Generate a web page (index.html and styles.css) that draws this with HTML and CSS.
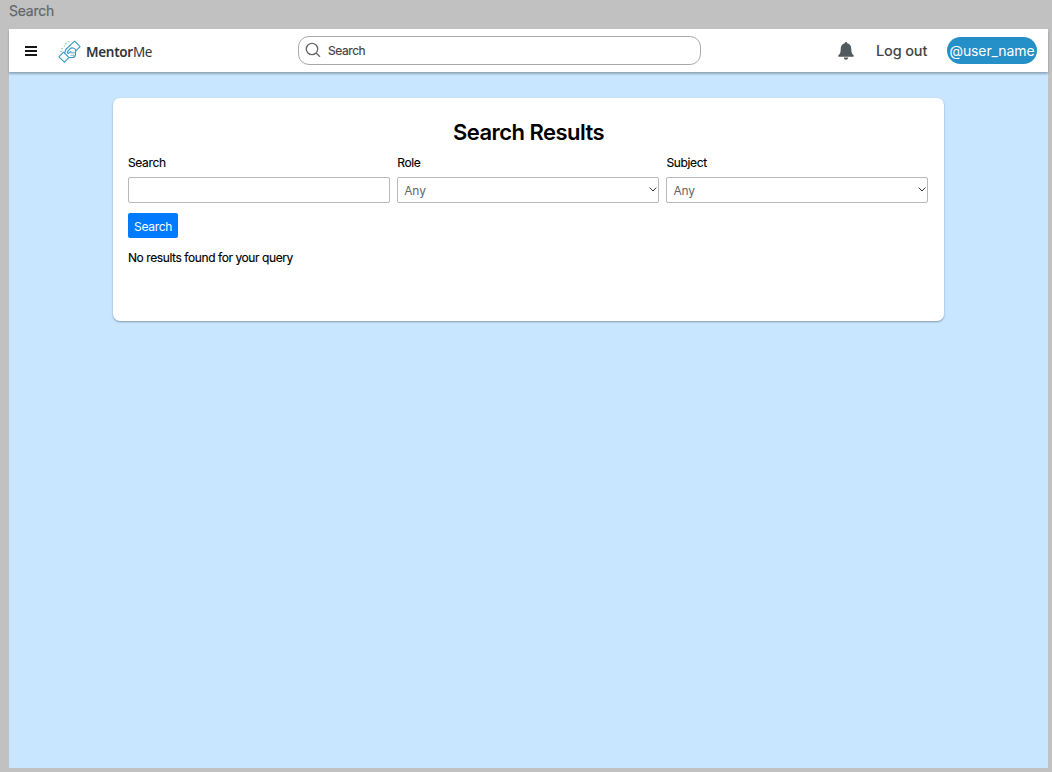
FILE: index.html
```html
<!DOCTYPE html>
<html lang="en">
<head>
<meta charset="utf-8">
<title>Search</title>
<link rel="stylesheet" href="styles.css">
</head>
<body>
<div class="frame-label">Search</div>
<div class="frame">
  <header class="topbar">
    <svg class="menu" viewBox="0 0 12 10"><path d="M0 1h12M0 5h12M0 9h12"/></svg>
    <svg class="logo" viewBox="0 0 24 24" fill="none" stroke="#3b9bc9" stroke-width="1.200" stroke-linejoin="round" stroke-linecap="round">
      <path d="M12.400 5.800L17.400 1.200 23 6.900 18.400 11.600M5.800 12.600L1 17.600 6.600 23 11.400 18.300z"/>
      <path d="M12.400 5.800L8.400 9.400 7 13.300M11.400 18.300h3.800c1.800 0 2.800-1.200 3-3l.2-5.200c-1-2-4.400-2.400-5.800-1l-2.800 3.200c-.6 1 .6 2 1.500 1.300L13.600 12"/>
      <path stroke="#69bfd0" d="M13.600 13.400h3.600M13.400 15.900h3.400"/>
      <path stroke="#65c28b" d="M4.200 8.600v.8M8.400 3.400v.8M6.400 6.300h.3M3 12h.3M11.200 1.800h.3"/>
    </svg>
    <div class="brand"><b>Mentor</b>Me</div>
    <div class="searchbox">
      <svg class="lens" viewBox="0 0 16 16"><circle cx="7" cy="7" r="5.7"/><path d="M11.1 11.1L15 14.7"/></svg>
      <span>Search</span>
    </div>
    <svg class="bell" viewBox="0 0 16 18"><path d="M8 0c.8 0 1.2.6 1.2 1.3C12 1.9 13.3 4 13.3 7c0 3.3.6 5 2.4 6.4.4.6 0 1.3-.7 1.3H1c-.7 0-1.1-.7-.7-1.3C2.100 12 2.700 10.300 2.700 7c0-3 1.300-5.100 4.100-5.700C6.800.6 7.200 0 8 0zM5.800 15.600h4.400C10 17.100 9.200 17.800 8 17.800s-2-.7-2.200-2.200z"/></svg>
    <div class="logout">Log out</div>
    <div class="user"><span>@user_name</span></div>
  </header>
  <main class="card">
    <h1>Search Results</h1>
    <div class="fields">
      <div class="field"><div class="label">Search</div><div class="control"></div></div>
      <div class="field"><div class="label">Role</div><div class="control"><span>Any</span><svg class="chevron" viewBox="0 0 8 5"><path d="M.7.6L4 4 7.300.6"/></svg></div></div>
      <div class="field"><div class="label">Subject</div><div class="control"><span>Any</span><svg class="chevron" viewBox="0 0 8 5"><path d="M.7.6L4 4 7.300.6"/></svg></div></div>
    </div>
    <div class="button">Search</div>
    <p class="empty">No results found for your query</p>
  </main>
</div>
</body>
</html>
```
FILE: styles.css
```css
* { box-sizing: border-box; }
body { margin: 0; height: 772px; overflow: hidden; background: #c1c1c1; font-family: Inter, "Liberation Sans", sans-serif; color: #000; }
.frame-label { height: 29px; padding: 2px 0 0 9px; font-size: 14px; line-height: 18px; letter-spacing: -.25px; color: #666; -webkit-text-stroke: .2px #666; }
.frame { width: 1039px; height: 739px; margin-left: 9px; background: #c8e6ff; }
.topbar { height: 43px; display: flex; align-items: center; background: #fff; box-shadow: 0 2px 2px rgba(0, 0, 0, .28); padding: 0 11px 0 16px; }
.menu { width: 12px; height: 10px; fill: none; stroke: #161616; stroke-width: 2; margin-top: 1px; }
.logo { width: 23px; height: 23px; margin-left: 21px; margin-top: 1px; }
.brand { width: 68px; margin: 3px 0 0 5px; font-family: "Noto Sans", sans-serif; font-size: 13.500px; line-height: 20px; letter-spacing: -.3px; color: #303437; white-space: nowrap; }
.brand b { font-weight: 600; }
.searchbox { width: 403px; height: 29px; margin-left: 144px; padding-left: 6px; display: flex; align-items: center; border: 1px solid #a9a9a9; border-radius: 11px; font-size: 12px; letter-spacing: -.42px; color: #444; -webkit-text-stroke: .2px #444; }
.lens { width: 16px; height: 16px; margin: -1px 7px 0 0; fill: none; stroke: #666; stroke-width: 1.300; }
.bell { width: 16px; height: 18px; margin-left: 137px; fill: #505a5e; }
.logout { width: 52px; margin-left: 22px; font-size: 14.500px; font-weight: 500; letter-spacing: -.15px; white-space: nowrap; color: #444; }
.user { width: 90px; height: 27px; margin-left: auto; display: flex; align-items: center; justify-content: center; border-radius: 14px; background: #258fc7; color: #fff; font-size: 14px; letter-spacing: -.1px; white-space: nowrap; }
.card { width: 831px; height: 223.500px; margin: 25.500px 0 0 104px; padding: 20.500px 15px 0; background: #fff; border-radius: 7px; box-shadow: 0 1px 2px rgba(0, 0, 0, .35); }
h1 { margin: 0; height: 36px; text-align: center; font-size: 22px; line-height: 29px; font-weight: 600; letter-spacing: -.54px; }
.fields { display: grid; grid-template-columns: repeat(3, 262px); column-gap: 7.200px; }
.label { height: 23px; font-size: 12px; line-height: 18px; letter-spacing: -.35px; -webkit-text-stroke: .15px #000; }
.control { height: 26px; padding: 0 1.500px 0 6px; display: flex; align-items: center; border: 1px solid #b8b8b8; border-radius: 2px; font-size: 12px; letter-spacing: -.1px; color: #666; }
.chevron { width: 8px; height: 5px; margin: 0 0 2px auto; fill: none; stroke: #333; stroke-width: 1; }
.button { width: 50px; height: 25px; margin-top: 10px; border-radius: 2px; background: #007bff; color: #fff; font-size: 12px; line-height: 27px; letter-spacing: -.33px; text-align: center; }
.empty { margin: 11px 0 0; font-size: 12px; line-height: 18px; letter-spacing: -.42px; -webkit-text-stroke: .15px #000; }
```
